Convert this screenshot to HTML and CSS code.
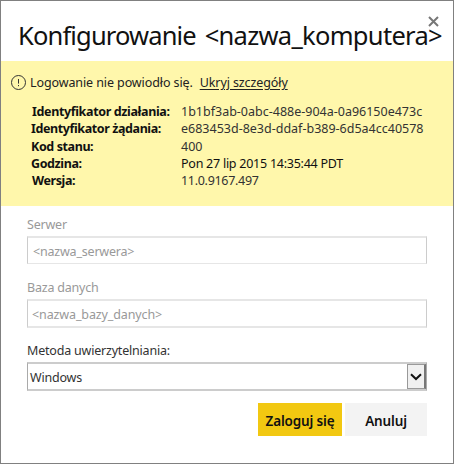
FILE: index.html
```html
<!DOCTYPE html>
<html lang="pl">
<head>
<meta charset="utf-8">
<title>Konfigurowanie</title>
<link rel="stylesheet" href="styles.css">
</head>
<body>
<main class="dialog">
  <header class="header">
    <h1 class="title">Konfigurowanie <span class="computer">&lt;nazwa_komputera&gt;</span></h1>
    <svg class="close" viewBox="0 0 11 11" role="img" aria-label="Zamknij"><path d="M1 1 10 10M10 1 1 10"/></svg>
  </header>
  <section class="alert">
    <div class="summary">
      <svg class="warn" viewBox="0 0 15 15"><circle cx="7.5" cy="7.5" r="7"/><path d="M7.5 4v4.6M7.5 10v1.2"/></svg>
      <span class="message">Logowanie nie powiodło się.</span>
      <a class="toggle">Ukryj szczegóły</a>
    </div>
    <dl class="details">
      <dt class="k1">Identyfikator działania:</dt><dd>1b1bf3ab-0abc-488e-904a-0a96150e473c</dd>
      <dt>Identyfikator żądania:</dt><dd>e683453d-8e3d-ddaf-b389-6d5a4cc40578</dd>
      <dt>Kod stanu:</dt><dd>400</dd>
      <dt>Godzina:</dt><dd class="time">Pon 27 lip 2015 14:35:44 PDT</dd>
      <dt class="k5">Wersja:</dt><dd class="version">11.0.9167.497</dd>
    </dl>
  </section>
  <form class="form">
    <label class="label server-label">Serwer</label>
    <div class="field server">&lt;nazwa_serwera&gt;</div>
    <label class="label database-label">Baza danych</label>
    <div class="field database">&lt;nazwa_bazy_danych&gt;</div>
    <label class="label method-label">Metoda uwierzytelniania:</label>
    <div class="select"><span class="value">Windows</span><span class="arrow"><svg viewBox="0 0 12 8"><path d="M1 1.2 6 6 11 1.2"/></svg></span></div>
    <div class="actions">
      <button type="button" class="button primary">Zaloguj się</button>
      <button type="button" class="button cancel">Anuluj</button>
    </div>
  </form>
</main>
</body>
</html>
```
FILE: styles.css
```css
* { box-sizing: border-box; }
body { margin: 0; font: 12.5px/17px "Noto Sans", "Open Sans", sans-serif; color: #333; background: #fff; }
.dialog { width: 454px; height: 464px; border: 1px solid #808080; overflow: hidden; background: #fff; }
.header { position: relative; height: 60px; padding: 15px 0 0 17px; }
.title { margin: 0; font-size: 25.5px; line-height: 38px; font-weight: 400; letter-spacing: -0.85px; word-spacing: 3px; color: #111; white-space: nowrap; }
.computer { letter-spacing: -0.7px; }
.close { position: absolute; left: 427px; top: 15px; width: 11px; height: 11px; }
.close path { fill: none; stroke: #777; stroke-width: 2; }
.alert { height: 145px; padding: 13px 0 0 10px; background: #fff7ab; }
.summary { display: flex; align-items: center; height: 17px; white-space: nowrap; color: #222; letter-spacing: -0.1px; }
.warn { width: 15px; height: 15px; margin-right: 4px; flex: none; }
.warn circle, .warn path { fill: none; stroke: #333; stroke-width: 1; }
.toggle { margin-left: 7px; text-decoration: underline; text-underline-offset: 2px; }
.details { display: grid; grid-template-columns: 150px 1fr; grid-auto-rows: 17.25px; margin: 12px 0 0 20px; white-space: nowrap; }
.details dt { font-weight: 700; color: #111; letter-spacing: -0.4px; }
.details .k1 { padding-left: 1px; letter-spacing: -0.36px; }
.details .k5 { padding-left: 1px; }
.details dd { margin: 0; }
.details .time { color: #111; letter-spacing: -0.25px; }
.details .version { letter-spacing: -0.3px; }
.form { width: 400px; margin-left: 26px; padding-top: 10px; letter-spacing: -0.2px; }
.label { display: block; height: 17px; white-space: nowrap; }
.server-label, .database-label, .field { color: #999; }
.field { height: 28px; margin-top: 3px; padding: 5px 5px 0; border: 1px solid #ccc; border-top: 2px solid #e6e6e6; border-bottom: 1px solid #e6e6e6; line-height: 17px; }
.database-label { margin-top: 15px; }
.database { padding-left: 4px; border-bottom-width: 2px; height: 29px; letter-spacing: -0.12px; }
.method-label { margin-top: 14px; }
.select { display: flex; justify-content: space-between; height: 29px; margin-top: 3px; border: 1px solid #aaa; border-top: 2px solid #ccc; border-bottom: 2px solid #ccc; }
.value { padding: 5px 2px 0; }
.arrow { width: 19px; display: flex; align-items: center; justify-content: center; border: 1px solid #999; border-right: 2px solid #777; background: #f0f0f0; }
.arrow svg { width: 12px; height: 8px; }
.arrow path { fill: none; stroke: #111; stroke-width: 2; }
.actions { display: flex; justify-content: flex-end; gap: 3px; margin-top: 12px; }
.button { height: 33px; padding: 3px 0 0; border: 0; font: 600 13.5px/20px "Noto Sans", "Open Sans", sans-serif; letter-spacing: -0.15px; color: #111; }
.primary { width: 84px; background: #f2c811; }
.cancel { width: 82px; background: #f3f3f3; }
```
